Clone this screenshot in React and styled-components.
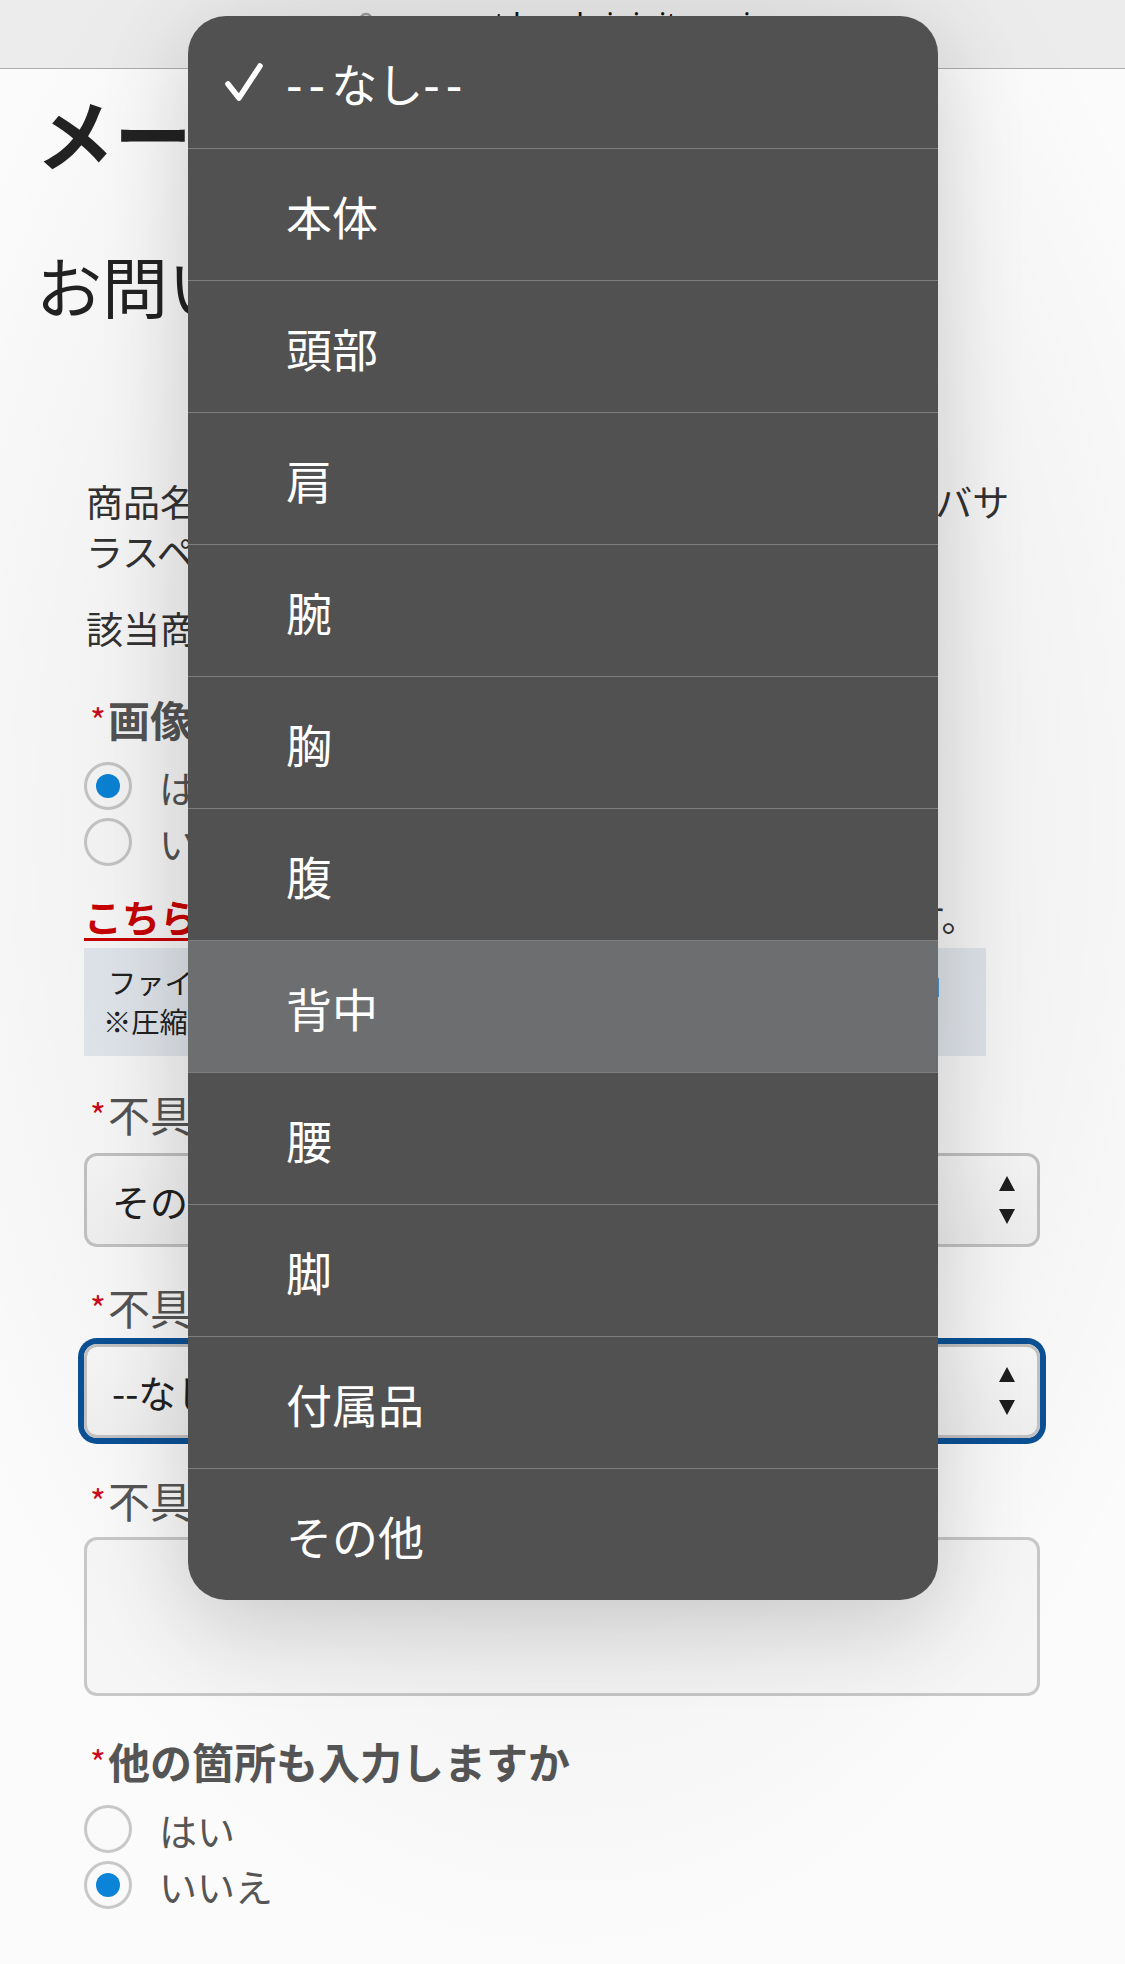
import React from 'react';
import styled, { createGlobalStyle } from 'styled-components';

const GlobalStyle = createGlobalStyle`
  *, *::before, *::after { box-sizing: border-box; }
  html, body { margin: 0; padding: 0; }
  body {
    width: 1125px;
    height: 1964px;
    overflow: hidden;
    background: #fbfbfb;
    font-family: "Noto Sans CJK JP", "Noto Sans", sans-serif;
    text-spacing-trim: space-all;
  }
`;

const Screen = styled.div`
  position: relative;
  width: 1125px;
  height: 1964px;
  overflow: hidden;
  background: #fbfbfb;
`;

const AddressBar = styled.div`
  height: 69px;
  border-bottom: 1px solid #aeaeae;
  background: #ececec;
  display: flex;
  justify-content: center;
  align-items: flex-start;
  gap: 18px;
  padding-top: 6px;
  color: #111;
  font-family: "Noto Sans", sans-serif;
  font-size: 30px;
  line-height: 36px;
`;

const Page = styled.main`
  padding: 0 85px 0 36px;
`;

const Title = styled.h1`
  margin: 16px 0 0;
  font-size: 78px;
  line-height: 94px;
  font-weight: 700;
  color: #222;
`;

const Subtitle = styled.h2`
  margin: 63px 0 0;
  font-size: 66px;
  line-height: 84px;
  font-weight: 400;
  color: #222;
`;

const Form = styled.form`
  margin-left: 48px;
  width: 956px;
`;

const ProductInfo = styled.p`
  margin: ${p => p.$mt}px 0 0 2px;
  width: 926px;
  font-size: 37px;
  line-height: 50px;
  color: #333;
`;

const FieldLabel = styled.div`
  margin-top: ${p => p.$mt}px;
  padding-left: 6px;
  font-size: 42px;
  line-height: 50px;
  font-weight: ${p => (p.$bold ? 700 : 400)};
  color: #555;
`;

const Req = styled.span`
  color: #cc0a1e;
  font-size: 34px;
  line-height: 0;
  vertical-align: 3px;
  margin-right: 2px;
  font-weight: 400;
`;

const RadioGroup = styled.div`
  margin-top: ${p => p.$mt}px;
  display: flex;
  flex-direction: column;
`;

const RadioRow = styled.label`
  height: 56px;
  display: flex;
  align-items: center;
  gap: 27px;
  font-size: 38px;
  color: #555;
`;

const RadioCircle = styled.span`
  flex: none;
  width: 48px;
  height: 48px;
  border-radius: 50%;
  border: 3px solid #c8c8c8;
  background: #fafafa;
  display: flex;
  align-items: center;
  justify-content: center;
  &::after {
    content: '';
    width: 24px;
    height: 24px;
    border-radius: 50%;
    background: ${p => (p.$checked ? '#0b84d8' : 'transparent')};
  }
`;

const Notice = styled.p`
  margin: 24px 0 0;
  font-size: 35.6px;
  line-height: 44px;
  color: #333;
`;

const NoticeLink = styled.a`
  color: #cc0000;
  font-size: 38px;
  font-weight: 700;
  text-decoration: underline;
  text-decoration-thickness: 3px;
  text-underline-offset: 6px;
`;

const InfoBox = styled.div`
  margin-top: 9px;
  width: 902px;
  padding: 14px 20px 16px 24px;
  background: #e4e9ef;
  font-size: 28.3px;
  line-height: 39px;
  color: #222;
`;

const InfoLine = styled.div`
  margin-left: ${p => (p.$note ? -5 : 0)}px;
  white-space: nowrap;
`;

const SelectBox = styled.div`
  margin-top: ${p => p.$mt}px;
  height: 94px;
  border: 3px solid #c3c3c3;
  border-radius: 13px;
  background: linear-gradient(#f9f9f9, #f1f1f1);
  box-shadow: ${p => (p.$focused ? '0 0 0 6px #0b5196' : 'none')};
  display: flex;
  align-items: center;
  justify-content: space-between;
  padding: 0 22px 0 25px;
  font-size: 38px;
  color: #222;
`;

const Field = styled.textarea`
  display: block;
  margin-top: ${p => p.$mt}px;
  width: 956px;
  height: 159px;
  border: 3px solid #c8c8c8;
  border-radius: 13px;
  background: #f6f6f6;
  resize: none;
`;

const Vignette = styled.div`
  position: absolute;
  inset: 0;
  pointer-events: none;
  background: radial-gradient(ellipse 62% 58% at 50% 42%, rgba(0, 0, 0, 0.085) 0%, rgba(0, 0, 0, 0.06) 45%, rgba(0, 0, 0, 0) 100%);
`;

const Menu = styled.ul`
  position: absolute;
  left: 188px;
  top: 16px;
  width: 750px;
  margin: 0;
  padding: 0;
  list-style: none;
  background: #515151;
  border-radius: 38px;
  overflow: hidden;
  box-shadow: 0 24px 90px rgba(0, 0, 0, 0.16);
`;

const MenuItem = styled.li`
  height: 132px;
  display: flex;
  align-items: center;
  padding-left: 35px;
  background: ${p => (p.$active ? '#6d6e70' : 'transparent')};
  color: #fff;
  font-size: 46px;
  & + & {
    border-top: 1px solid #7e7e7e;
  }
`;

const Dash = styled.span`
  font-family: "DejaVu Sans", sans-serif;
  letter-spacing: 6px;
`;

const CheckSlot = styled.span`
  flex: none;
  width: 63px;
  display: flex;
  align-items: center;
`;

const Check = () => (
  <svg width="42" height="40" viewBox="0 0 42 40">
    <polyline points="5,22 16,36 37,4" fill="none" stroke="#fff" strokeWidth="5.5" strokeLinecap="round" strokeLinejoin="round" />
  </svg>
);

const Lock = () => (
  <svg width="20" height="34" viewBox="0 0 20 34" style={{ marginTop: 4 }}>
    <path d="M4 16 V10 a6 6 0 0 1 12 0 V16" fill="none" stroke="#9a9a9a" strokeWidth="2.4" />
    <rect x="1" y="15" width="18" height="15" rx="3" fill="#9a9a9a" />
  </svg>
);

const Arrows = () => (
  <svg width="16" height="48" viewBox="0 0 16 48">
    <polygon points="8,0 16,15 0,15" fill="#1e1e1e" />
    <polygon points="0,33 16,33 8,48" fill="#1e1e1e" />
  </svg>
);

const options = ['--なし--', '本体', '頭部', '肩', '腕', '胸', '腹', '背中', '腰', '脚', '付属品', 'その他'];

const renderOption = o =>
  o.startsWith('--') ? (
    <span><Dash>--</Dash>なし<Dash>--</Dash></span>
  ) : (
    o
  );

export default function App() {
  return (
    <Screen>
      <GlobalStyle />
      <AddressBar>
        <Lock />
        <span>support.heads.injuite.co.jp</span>
      </AddressBar>
      <Page>
        <Title>メールでのお問い合わせ</Title>
        <Subtitle>お問い合わせフォーム</Subtitle>
        <Form>
          <ProductInfo $mt={150}>商品名：Ｓ．Ｈ．Ｆｉｇｕａｒｔｓ　仮面ライダーバサラスペシャルセット</ProductInfo>
          <ProductInfo $mt={27}>該当商品：仮面ライダーバサラ</ProductInfo>

          <FieldLabel $bold $mt={41}><Req>*</Req>画像の添付はありますか</FieldLabel>
          <RadioGroup $mt={14}>
            <RadioRow><RadioCircle $checked />はい</RadioRow>
            <RadioRow><RadioCircle />いいえ</RadioRow>
          </RadioGroup>

          <Notice><NoticeLink>こちら</NoticeLink>の注意事項をご確認の上、添付をお願いします。</Notice>
          <InfoBox>
            <InfoLine>ファイル形式は「ＪＰＧ」「ＰＮＧ」、容量は１点「５ＭＢ以内」</InfoLine>
            <InfoLine $note>※圧縮ファイル（zip等）は添付できません。</InfoLine>
          </InfoBox>

          <FieldLabel $mt={33}><Req>*</Req>不具合の種類</FieldLabel>
          <SelectBox $mt={14}>その他<Arrows /></SelectBox>

          <FieldLabel $mt={35}><Req>*</Req>不具合の箇所</FieldLabel>
          <SelectBox $mt={12} $focused>--なし--<Arrows /></SelectBox>

          <FieldLabel $mt={37}><Req>*</Req>不具合の内容</FieldLabel>
          <Field $mt={12} readOnly />

          <FieldLabel $bold $mt={40}><Req>*</Req>他の箇所も入力しますか</FieldLabel>
          <RadioGroup $mt={15}>
            <RadioRow><RadioCircle />はい</RadioRow>
            <RadioRow><RadioCircle $checked />いいえ</RadioRow>
          </RadioGroup>
        </Form>
      </Page>
      <Vignette />
      <Menu>
        {options.map((o, i) => (
          <MenuItem key={o} $active={o === '背中'}>
            <CheckSlot>{i === 0 && <Check />}</CheckSlot>
            {renderOption(o)}
          </MenuItem>
        ))}
      </Menu>
    </Screen>
  );
}
